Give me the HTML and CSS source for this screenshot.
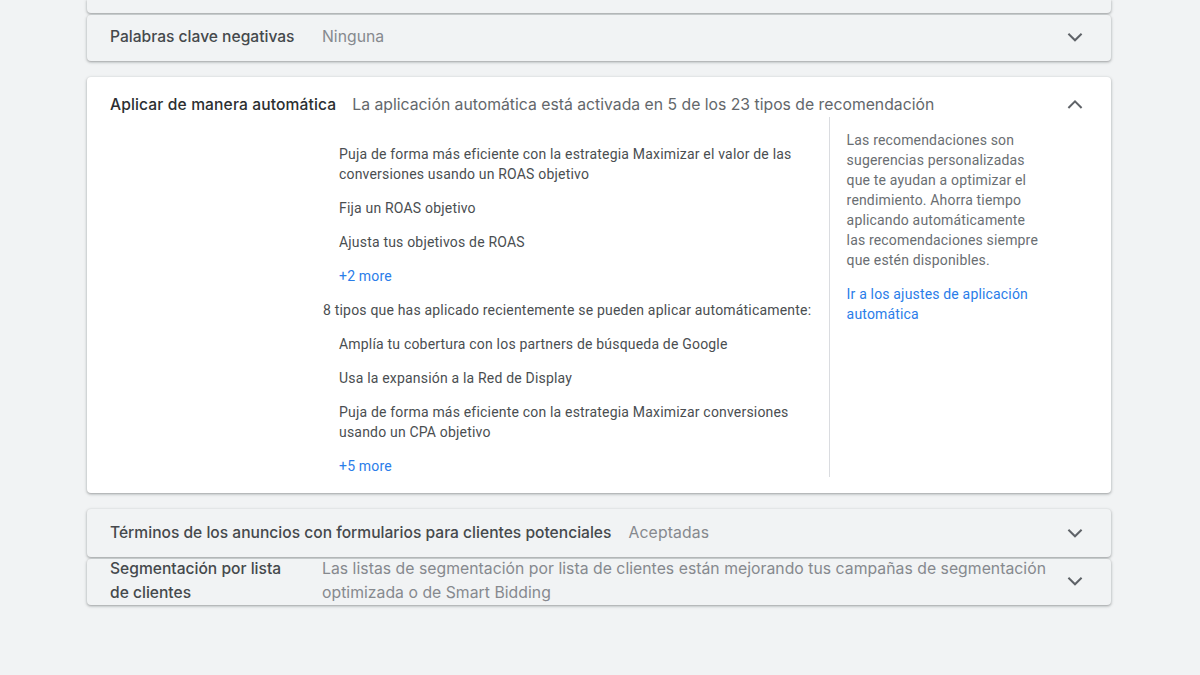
FILE: index.html
```
<!DOCTYPE html>
<html lang="es">
<head>
<meta charset="utf-8">
<title>Aplicar de manera automática</title>
<link rel="stylesheet" href="styles.css">
</head>
<body>
<main class="page">
  <section class="card card-stub"></section>
  <section class="card row row-neg">
    <h3 class="title title-col">Palabras clave negativas</h3>
    <p class="summary">Ninguna</p>
    <svg class="chev" viewBox="0 0 24 24"><path d="M5.4 8.7 12 15.3l6.6-6.6"/></svg>
  </section>
  <section class="card card-open">
    <header class="open-head">
      <h3 class="title title-dark">Aplicar de manera automática</h3>
      <p class="summary summary-open">La aplicación automática está activada en 5 de los 23 tipos de recomendación</p>
      <svg class="chev" viewBox="0 0 24 24"><path d="M5.4 15 12 8.4l6.6 6.6"/></svg>
    </header>
    <div class="open-body">
      <div class="lists">
        <ul class="list">
          <li>Puja de forma más eficiente con la estrategia Maximizar el valor de las conversiones usando un ROAS objetivo</li>
          <li>Fija un ROAS objetivo</li>
          <li>Ajusta tus objetivos de ROAS</li>
          <li><a class="link" href="#">+2 more</a></li>
        </ul>
        <p class="list-head">8 tipos que has aplicado recientemente se pueden aplicar automáticamente:</p>
        <ul class="list">
          <li>Amplía tu cobertura con los partners de búsqueda de Google</li>
          <li>Usa la expansión a la Red de Display</li>
          <li>Puja de forma más eficiente con la estrategia Maximizar conversiones usando un CPA objetivo</li>
          <li><a class="link" href="#">+5 more</a></li>
        </ul>
      </div>
      <aside class="side">
        <p>Las recomendaciones son sugerencias personalizadas que te ayudan a optimizar el rendimiento. Ahorra tiempo aplicando automáticamente las recomendaciones siempre que estén disponibles.</p>
        <a class="link" href="#">Ir a los ajustes de aplicación automática</a>
      </aside>
    </div>
  </section>
  <section class="card row row-terms">
    <h3 class="title">Términos de los anuncios con formularios para clientes potenciales</h3>
    <p class="summary summary-terms">Aceptadas</p>
    <svg class="chev" viewBox="0 0 24 24"><path d="M5.4 8.7 12 15.3l6.6-6.6"/></svg>
  </section>
  <section class="card row row-seg">
    <h3 class="title title-col">Segmentación por lista de clientes</h3>
    <p class="summary summary-seg">Las listas de segmentación por lista de clientes están mejorando tus campañas de segmentación optimizada o de Smart Bidding</p>
    <svg class="chev" viewBox="0 0 24 24"><path d="M5.4 8.7 12 15.3l6.6-6.6"/></svg>
  </section>
</main>
</body>
</html>
```
FILE: styles.css
```
* { box-sizing: border-box; }
html, body { margin: 0; height: 100%; }
body {
  background: #f1f3f4;
  font-family: Roboto, "Liberation Sans", sans-serif;
  color: #3c4043;
  overflow: hidden;
  padding-right: 2px;
}
.page { width: 1024px; margin: 0 auto; display: flex; flex-direction: column; }
.card {
  border-radius: 4px;
  background: #f1f3f4;
  box-shadow: 0 1px 2px rgba(60,64,67,.3), 0 1px 3px 1px rgba(60,64,67,.15);
}
.card-stub { height: 13px; border-radius: 0 0 4px 4px; margin-bottom: 2px; }
.row { display: flex; align-items: center; padding: 0 24px 0 23px; }
.row-neg { height: 46px; margin-bottom: 16px; padding-bottom: 2px; }
.row-terms { height: 48px; margin: 16px 0 2px; padding-bottom: 1px; }
.row-seg { height: 46px; overflow: hidden; padding-bottom: 2px; }
.title, .summary { margin: 0; font-family: Inter, Roboto, sans-serif; font-size: 15.75px; line-height: 24px; }
.title { font-size: 15.6px; font-weight: 500; color: #45494c; white-space: nowrap; }
.title-dark { color: #2c2f31; letter-spacing: .13px; }
.title-col { white-space: normal; width: 212px; flex: none; padding-right: 22px; }
.summary { color: #86898e; white-space: nowrap; }
.summary-terms { margin-left: 17px; letter-spacing: .15px; }
.summary-seg { white-space: normal; width: 735px; flex: none; letter-spacing: .03px; }
.summary-open { color: #63676b; margin-left: 16px; }
.chev { width: 24px; height: 24px; margin-left: auto; flex: none; fill: none; stroke: #5f6368; stroke-width: 2; }
.card-open { background: #fff; height: 416px; padding: 0 24px 0 23px; }
.open-head { display: flex; align-items: center; height: 40px; padding-top: 16px; }
.open-body { display: flex; height: 360px; }
.lists { width: 720px; padding: 27px 0 0 213px; flex: none; border-right: 1px solid #dadce0; font-size: 14px; line-height: 20px; letter-spacing: .19px; color: #4a4e51; }
.list { list-style: none; margin: 0; padding: 0 0 0 16px; }
.list li { margin-bottom: 14px; }
.list-head { margin: 0 0 14px; white-space: nowrap; }
.link { color: #2a7de9; text-decoration: none; }
.side { width: 196px; margin-left: 16.6px; padding-top: 13px; font-size: 14px; line-height: 20px; letter-spacing: .17px; color: #6a6e72; }
.side p { margin: 0 0 14px; }
.side .link { display: block; }
```
